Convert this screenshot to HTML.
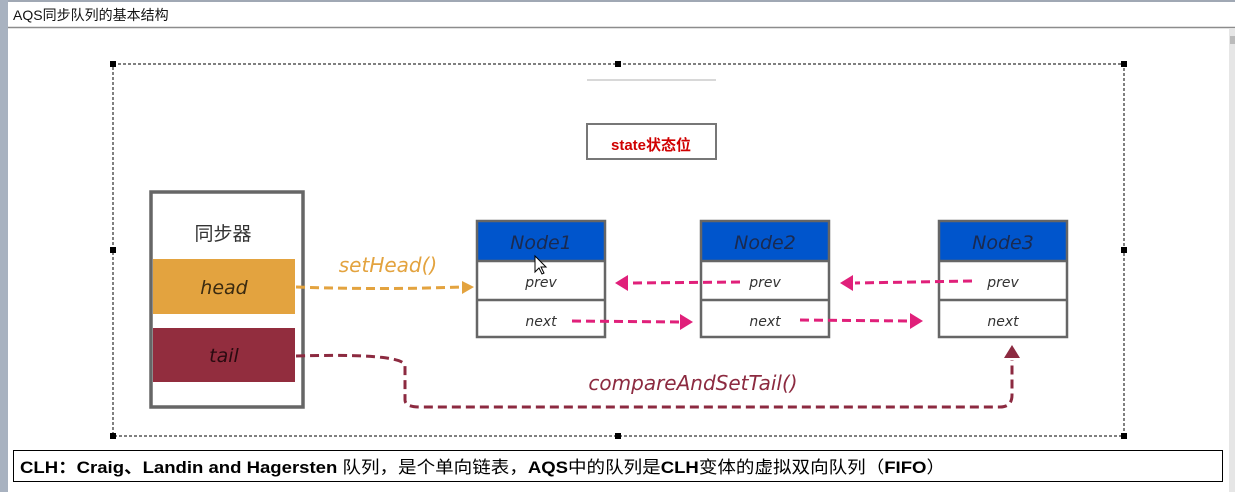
<!DOCTYPE html>
<html><head><meta charset="utf-8"><style>
html,body{margin:0;padding:0;width:1235px;height:492px;overflow:hidden;background:#fff;font-family:"Liberation Sans","Noto Sans CJK SC",sans-serif}
</style></head><body>
<svg width="1235" height="492" xmlns="http://www.w3.org/2000/svg" style="position:absolute;left:0;top:0">
<rect x="0" y="0" width="1235" height="492" fill="#fff"/>
<rect x="0" y="0" width="1235" height="2" fill="#a0a8b4"/>
<rect x="0" y="0" width="8" height="492" fill="#a8b2c0"/>
<line x1="8" y1="27.5" x2="1235" y2="27.5" stroke="#8c8c8c" stroke-width="1.5"/>
<text x="13" y="20" font-size="14" fill="#111" font-family="Liberation Sans, Noto Sans CJK SC, sans-serif">AQS同步队列的基本结构</text>
<rect x="1229" y="29" width="6" height="463" fill="#e6e6e6"/>
<rect x="1230" y="36" width="5" height="8" fill="#bbb"/>
<rect x="113" y="64" width="1011" height="372" fill="none" stroke="#000" stroke-width="1" stroke-dasharray="3,2"/>
<g fill="#000">
<rect x="110" y="61" width="6" height="6"/><rect x="615" y="61" width="6" height="6"/><rect x="1121" y="61" width="6" height="6"/>
<rect x="110" y="247" width="6" height="6"/><rect x="1121" y="247" width="6" height="6"/>
<rect x="110" y="433" width="6" height="6"/><rect x="615" y="433" width="6" height="6"/><rect x="1121" y="433" width="6" height="6"/>
</g>
<line x1="587" y1="80" x2="716" y2="80" stroke="#ccc" stroke-width="1.5"/>
<rect x="587" y="124" width="129" height="35" fill="#fff" stroke="#777" stroke-width="2"/>
<text x="651" y="150" font-size="15" font-weight="bold" fill="#d00000" text-anchor="middle" font-family="Liberation Sans, Noto Sans CJK SC, sans-serif">state状态位</text>
<rect x="151" y="192" width="152" height="215" fill="#fff" stroke="#666" stroke-width="3.5"/>
<text x="223" y="240" font-size="19" fill="#333" text-anchor="middle" font-family="Noto Sans CJK SC, sans-serif">同步器</text>
<rect x="153" y="259" width="142" height="55" fill="#e3a33f"/>
<text x="224" y="294" font-size="19" fill="#3a2a10" text-anchor="middle" font-style="italic" font-family="DejaVu Sans, sans-serif">head</text>
<rect x="153" y="328" width="142" height="54" fill="#922d3e"/>
<text x="224" y="362" font-size="19" fill="#2a0a10" text-anchor="middle" font-style="italic" font-family="DejaVu Sans, sans-serif">tail</text>
<g font-family="DejaVu Sans, sans-serif" font-style="italic">
<g transform="translate(477,221)">
<rect x="0" y="0" width="128" height="40" fill="#0055cc"/>
<rect x="0" y="0" width="128" height="116" fill="none" stroke="#666" stroke-width="2.5"/>
<line x1="0" y1="40" x2="128" y2="40" stroke="#666" stroke-width="2.5"/>
<line x1="0" y1="79" x2="128" y2="79" stroke="#666" stroke-width="2.5"/>
<text x="64" y="28" font-size="19" fill="#1a2a50" text-anchor="middle">Node1</text>
<text x="64" y="66" font-size="14" fill="#333" text-anchor="middle">prev</text>
<text x="64" y="105" font-size="14" fill="#333" text-anchor="middle">next</text>
</g>
<g transform="translate(701,221)">
<rect x="0" y="0" width="128" height="40" fill="#0055cc"/>
<rect x="0" y="0" width="128" height="116" fill="none" stroke="#666" stroke-width="2.5"/>
<line x1="0" y1="40" x2="128" y2="40" stroke="#666" stroke-width="2.5"/>
<line x1="0" y1="79" x2="128" y2="79" stroke="#666" stroke-width="2.5"/>
<text x="64" y="28" font-size="19" fill="#1a2a50" text-anchor="middle">Node2</text>
<text x="64" y="66" font-size="14" fill="#333" text-anchor="middle">prev</text>
<text x="64" y="105" font-size="14" fill="#333" text-anchor="middle">next</text>
</g>
<g transform="translate(939,221)">
<rect x="0" y="0" width="128" height="40" fill="#0055cc"/>
<rect x="0" y="0" width="128" height="116" fill="none" stroke="#666" stroke-width="2.5"/>
<line x1="0" y1="40" x2="128" y2="40" stroke="#666" stroke-width="2.5"/>
<line x1="0" y1="79" x2="128" y2="79" stroke="#666" stroke-width="2.5"/>
<text x="64" y="28" font-size="19" fill="#1a2a50" text-anchor="middle">Node3</text>
<text x="64" y="66" font-size="14" fill="#333" text-anchor="middle">prev</text>
<text x="64" y="105" font-size="14" fill="#333" text-anchor="middle">next</text>
</g>
<text x="388" y="272" font-size="20" fill="#e3a33f" text-anchor="middle">setHead()</text>
<text x="693" y="390" font-size="20" fill="#8c2a40" text-anchor="middle">compareAndSetTail()</text>
</g>
<g fill="none" stroke-width="3" stroke-dasharray="9,5">
<path d="M296 287 Q380 290 462 287" stroke="#e3a33f"/>
<path d="M572 321 L680 322" stroke="#e0207a"/>
<path d="M800 320 L910 321" stroke="#e0207a"/>
<path d="M740 282 L630 283" stroke="#e0207a"/>
<path d="M972 281 L855 283" stroke="#e0207a"/>
<path d="M296 356 Q400 353 405 365 L405 400 Q405 407 420 407 L1000 407 Q1012 407 1012 395 L1012 360" stroke="#8c2a40"/>
</g>
<g>
<polygon points="462,281 474,287 462,294" fill="#e3a33f"/>
<polygon points="680,314 693,322 680,330" fill="#e0207a"/>
<polygon points="910,313 923,321 910,329" fill="#e0207a"/>
<polygon points="628,275 615,283 628,291" fill="#e0207a"/>
<polygon points="853,275 840,283 853,291" fill="#e0207a"/>
<polygon points="1004,358 1012,345 1020,358" fill="#8c2a40"/>
</g>
<path d="M535 256 L535 272 L539 268 L542 274 L544 273 L541 267 L546 267 Z" fill="#fff" stroke="#000" stroke-width="1"/>
<rect x="13.5" y="450.5" width="1209" height="31" fill="#fff" stroke="#000" stroke-width="1"/>
<text x="20" y="473" font-size="17" fill="#000" textLength="925" lengthAdjust="spacingAndGlyphs" font-family="Liberation Sans, Noto Sans CJK SC, sans-serif"><tspan font-weight="bold">CLH：Craig、Landin and Hagersten </tspan>队列，是个单向链表，<tspan font-weight="bold">AQS</tspan>中的队列是<tspan font-weight="bold">CLH</tspan>变体的虚拟双向队列（<tspan font-weight="bold">FIFO</tspan>）</text>
</svg>
</body></html>
